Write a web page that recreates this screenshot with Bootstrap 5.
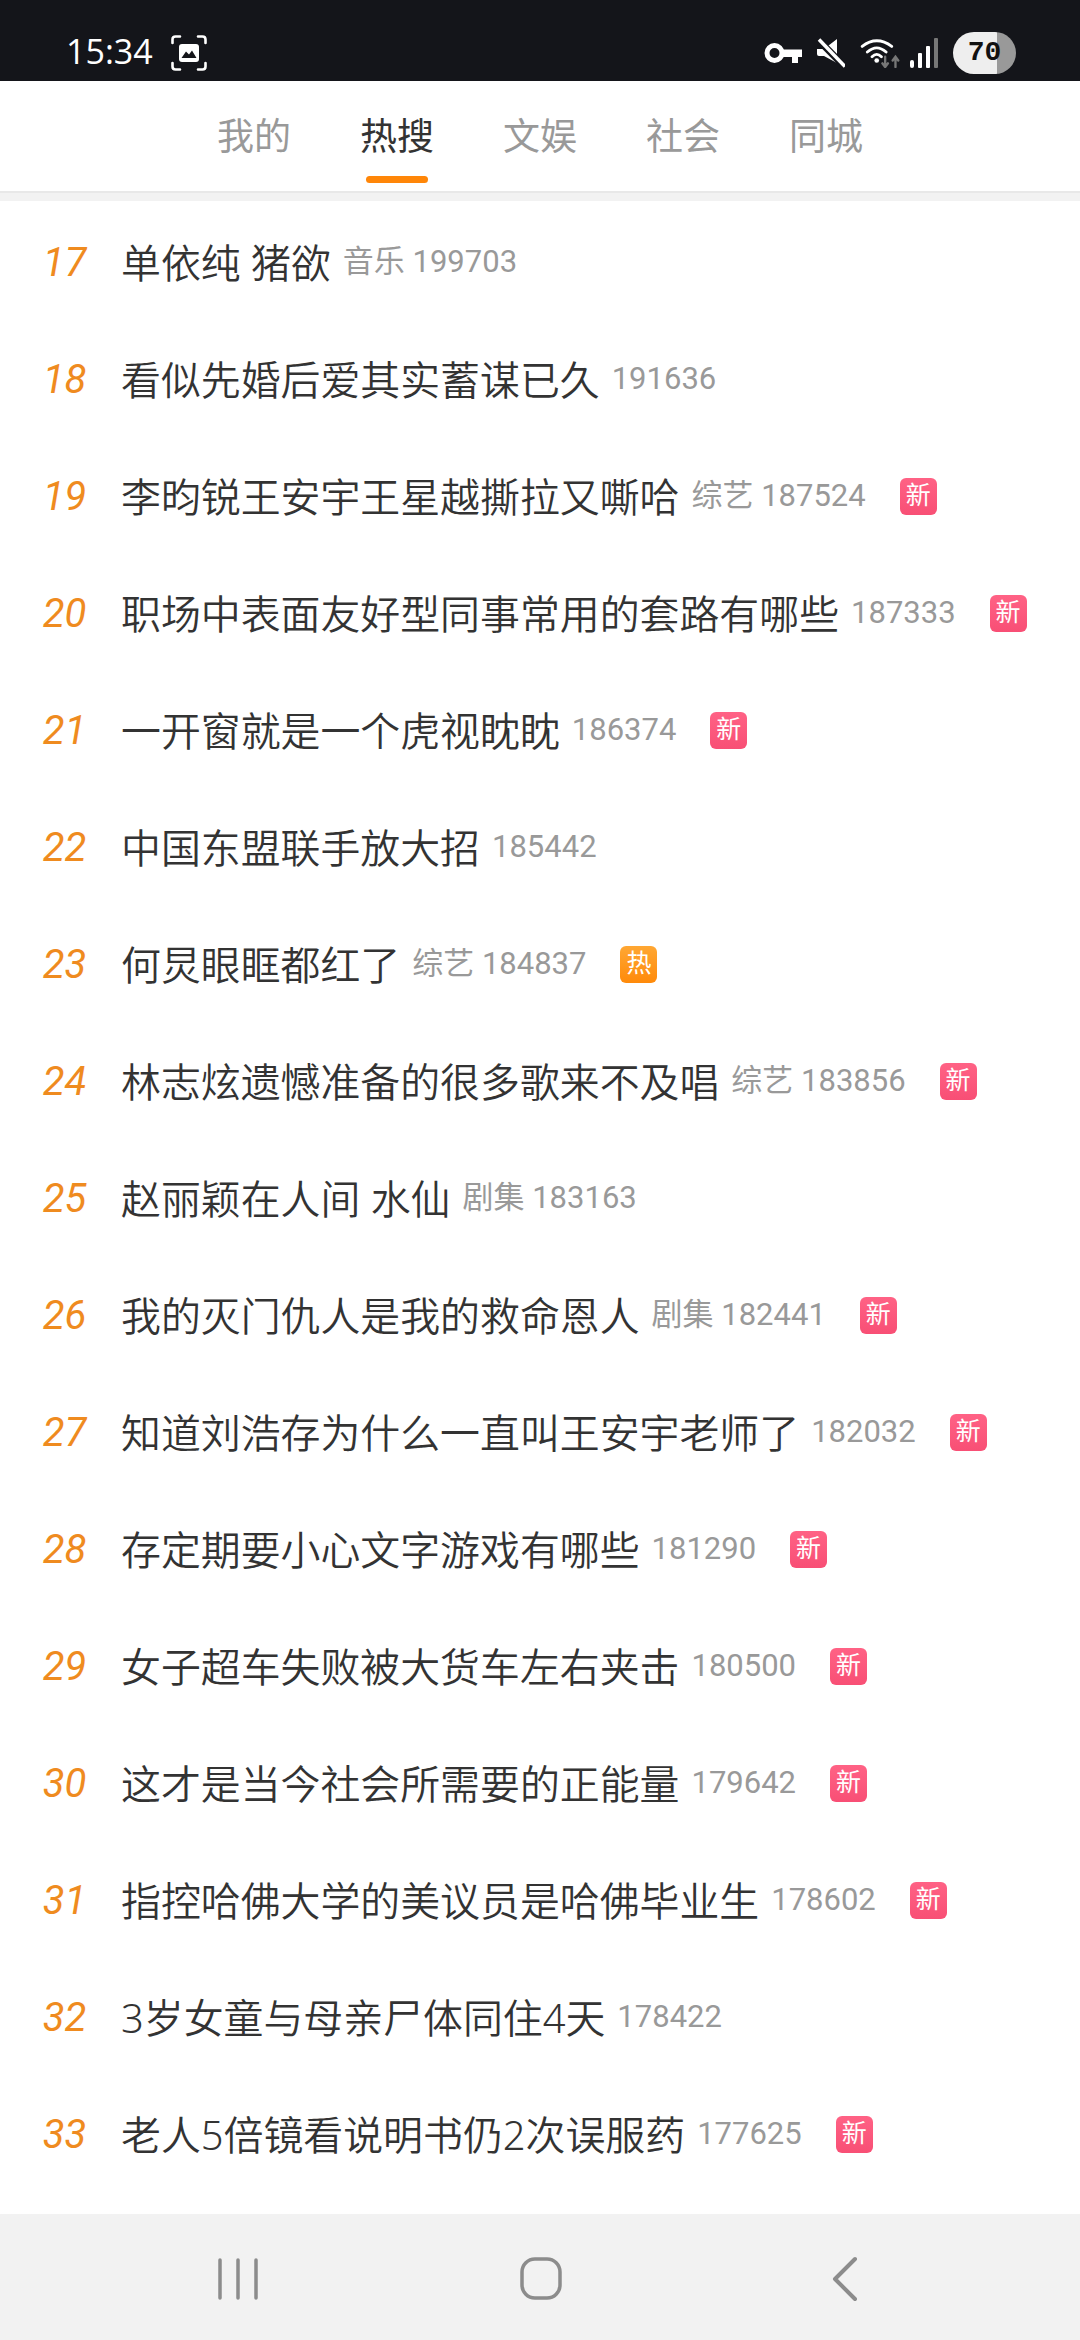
<!DOCTYPE html>
<html lang="zh-CN">
<head>
    <meta charset="UTF-8">
    <meta name="viewport" content="width=device-width, initial-scale=1.0">
    <title>热搜</title>
    <link rel="stylesheet" href="https://cdn.jsdelivr.net/npm/bootstrap@5.3.0/dist/css/bootstrap.min.css">
    <style>
        html, body { height: 2340px; overflow: hidden; }
        body {
            background: #fff;
            font-family: Roboto, "Noto Sans CJK SC", sans-serif;
        }
        .phone { height: 2340px; }
        .status-strip { height: 81px; background: #14151a; color: #fff; padding: 24px 64px 0 66px; }
        .status-time { width: 105px; margin-top: -4px; font-family: "Open Sans", sans-serif; font-size: 34px; line-height: 1; }
        .status-icons { gap: 15px; }
        .sig-icon { margin-left: -5px; }
        .batt-pill {
            width: 63px; height: 42px; border-radius: 21px;
            background: linear-gradient(90deg, #eee 0, #eee 44px, #999 44px);
            color: #111; font-family: "Liberation Mono", monospace; font-weight: 700; font-size: 28px; line-height: 42px;
            text-align: center;
        }
        .tab-strip { height: 112px; border-bottom: 2px solid #e8e8e8; padding-top: 36px; }
        .tab-cell { width: 143px; font-size: 37px; line-height: 42px; color: #999; text-align: center; }
        .tab-cell.is-on { color: #333; }
        .tab-bar { width: 62px; height: 7px; border-radius: 4px; background: #ff8608; margin: 17px auto 0; }
        .gap-strip { height: 8px; background: #f2f2f2; }
        .hot-list { padding-top: 3px; }
        .hot-row { height: 117px; padding: 0; border: 0; }
        .hot-num {
            width: 121px; padding-left: 8px; text-align: center; flex: none;
            font-size: 40px; font-style: italic; color: #ef8b1f;
        }
        .hot-title { font-family: "Noto Sans", "Noto Sans CJK SC", sans-serif; font-size: 39.9px; color: #333; white-space: nowrap; font-weight: 350; }
        .hot-sub { font-size: 31px; color: #999; white-space: nowrap; margin-left: 12px; }
        .hot-tag {
            width: 37px; height: 37px; border-radius: 6px; margin-left: 34px; flex: none;
            font-size: 25px; line-height: 36px; text-align: center; color: #fff;
        }
        .tag-new { background: linear-gradient(180deg, #ff6285, #f84f75); }
        .tag-hot { background: linear-gradient(180deg, #ffa733, #ff8a0a); }
        .sys-nav { height: 126px; background: #f2f2f2; }
        .sys-nav svg { display: block; }
    </style>
</head>
<body>
<div class="phone d-flex flex-column">
    <div class="status-strip d-flex align-items-center">
        <span class="status-time">15:34</span>
        <svg width="36" height="36" viewBox="0 0 36 36" fill="none" stroke="#fff" stroke-width="2.6" stroke-linecap="round">
            <path d="M1.5 8V4.500Q1.500 1.500 4.500 1.500H9M27 1.500H31.500Q34.500 1.500 34.500 4.500V8M1.500 28V31.500Q1.500 34.500 4.500 34.500H9M27 34.500H31.500Q34.500 34.500 34.500 31.500V28"/>
            <rect x="8" y="9" width="20" height="18" rx="3" fill="#fff" stroke="none"/>
            <path d="M10.500 23L15 16.500L18 19.500L21 15.500L25.500 23Z" fill="#14151a" stroke="none"/>
        </svg>
        <div class="status-icons d-flex align-items-center ms-auto">
            <svg width="38" height="22" viewBox="0 0 38 22" fill="none">
                <circle cx="10.500" cy="11" r="7.500" stroke="#fff" stroke-width="5"/>
                <path d="M18 7.500H38V15H34V21H28V15H18Z" fill="#fff"/>
            </svg>
            <svg width="28" height="30" viewBox="0 0 28 30" fill="none">
                <path d="M0 11H7L20 1V25L7 18H2Q0 18 0 16Z" fill="#fff"/>
                <path d="M1 1.500L28 29" stroke="#14151a" stroke-width="7"/>
                <path d="M2 1.500L28 28.500" stroke="#fff" stroke-width="3.500"/>
            </svg>
            <svg width="40" height="30" viewBox="0 0 41 32" fill="none" stroke="#fff" stroke-width="3" stroke-linecap="round">
                <path d="M1.500 9Q17 -3 33 9M7 15Q17 6 27 15M12 20Q17 15 22 20"/>
                <circle cx="17" cy="24" r="2.500" fill="#fff" stroke="none"/>
                <path d="M26 20V31M23 27L26 31L29 27M37 31V20M34 24L37 20L40 24" stroke="#777" stroke-width="2.500"/>
            </svg>
            <svg class="sig-icon" width="28" height="30" viewBox="0 0 28 30" fill="#fff">
                <rect x="0" y="22" width="4" height="8" rx="2"/>
                <rect x="8" y="15" width="4" height="15" rx="1"/>
                <rect x="16" y="8" width="4" height="22" rx="1"/>
                <rect x="24" y="0" width="4" height="30" rx="1" fill="#777"/>
            </svg>
            <div class="batt-pill">70</div>
        </div>
    </div>

    <div class="tab-strip d-flex justify-content-center">
        <div class="tab-cell">我的</div>
        <div class="tab-cell is-on">热搜<div class="tab-bar"></div></div>
        <div class="tab-cell">文娱</div>
        <div class="tab-cell">社会</div>
        <div class="tab-cell">同城</div>
    </div>
    <div class="gap-strip"></div>

    <div class="hot-list list-group list-group-flush flex-grow-1">
        <div class="hot-row list-group-item d-flex align-items-center"><span class="hot-num">17</span><span class="hot-title">单依纯 猪欲</span><span class="hot-sub">音乐 199703</span></div>
        <div class="hot-row list-group-item d-flex align-items-center"><span class="hot-num">18</span><span class="hot-title">看似先婚后爱其实蓄谋已久</span><span class="hot-sub">191636</span></div>
        <div class="hot-row list-group-item d-flex align-items-center"><span class="hot-num">19</span><span class="hot-title">李昀锐王安宇王星越撕拉又嘶哈</span><span class="hot-sub">综艺 187524</span><span class="hot-tag tag-new">新</span></div>
        <div class="hot-row list-group-item d-flex align-items-center"><span class="hot-num">20</span><span class="hot-title">职场中表面友好型同事常用的套路有哪些</span><span class="hot-sub">187333</span><span class="hot-tag tag-new">新</span></div>
        <div class="hot-row list-group-item d-flex align-items-center"><span class="hot-num">21</span><span class="hot-title">一开窗就是一个虎视眈眈</span><span class="hot-sub">186374</span><span class="hot-tag tag-new">新</span></div>
        <div class="hot-row list-group-item d-flex align-items-center"><span class="hot-num">22</span><span class="hot-title">中国东盟联手放大招</span><span class="hot-sub">185442</span></div>
        <div class="hot-row list-group-item d-flex align-items-center"><span class="hot-num">23</span><span class="hot-title">何炅眼眶都红了</span><span class="hot-sub">综艺 184837</span><span class="hot-tag tag-hot">热</span></div>
        <div class="hot-row list-group-item d-flex align-items-center"><span class="hot-num">24</span><span class="hot-title">林志炫遗憾准备的很多歌来不及唱</span><span class="hot-sub">综艺 183856</span><span class="hot-tag tag-new">新</span></div>
        <div class="hot-row list-group-item d-flex align-items-center"><span class="hot-num">25</span><span class="hot-title">赵丽颖在人间 水仙</span><span class="hot-sub">剧集 183163</span></div>
        <div class="hot-row list-group-item d-flex align-items-center"><span class="hot-num">26</span><span class="hot-title">我的灭门仇人是我的救命恩人</span><span class="hot-sub">剧集 182441</span><span class="hot-tag tag-new">新</span></div>
        <div class="hot-row list-group-item d-flex align-items-center"><span class="hot-num">27</span><span class="hot-title">知道刘浩存为什么一直叫王安宇老师了</span><span class="hot-sub">182032</span><span class="hot-tag tag-new">新</span></div>
        <div class="hot-row list-group-item d-flex align-items-center"><span class="hot-num">28</span><span class="hot-title">存定期要小心文字游戏有哪些</span><span class="hot-sub">181290</span><span class="hot-tag tag-new">新</span></div>
        <div class="hot-row list-group-item d-flex align-items-center"><span class="hot-num">29</span><span class="hot-title">女子超车失败被大货车左右夹击</span><span class="hot-sub">180500</span><span class="hot-tag tag-new">新</span></div>
        <div class="hot-row list-group-item d-flex align-items-center"><span class="hot-num">30</span><span class="hot-title">这才是当今社会所需要的正能量</span><span class="hot-sub">179642</span><span class="hot-tag tag-new">新</span></div>
        <div class="hot-row list-group-item d-flex align-items-center"><span class="hot-num">31</span><span class="hot-title">指控哈佛大学的美议员是哈佛毕业生</span><span class="hot-sub">178602</span><span class="hot-tag tag-new">新</span></div>
        <div class="hot-row list-group-item d-flex align-items-center"><span class="hot-num">32</span><span class="hot-title">3岁女童与母亲尸体同住4天</span><span class="hot-sub">178422</span></div>
        <div class="hot-row list-group-item d-flex align-items-center"><span class="hot-num">33</span><span class="hot-title">老人5倍镜看说明书仍2次误服药</span><span class="hot-sub">177625</span><span class="hot-tag tag-new">新</span></div>
    </div>

    <div class="sys-nav d-flex align-items-center justify-content-center">
        <svg width="1080" height="126" viewBox="0 0 1080 126" fill="none" stroke="#8c8c8c" stroke-width="3.500" stroke-linecap="round" stroke-linejoin="round">
            <path d="M220 46V84M238 46V84M256 46V84"/>
            <rect x="522" y="45" width="38" height="39" rx="13"/>
            <path d="M855 45L835 65L855 85" stroke-width="4"/>
        </svg>
    </div>
</div>
<script src="https://cdn.jsdelivr.net/npm/bootstrap@5.3.0/dist/js/bootstrap.bundle.min.js"></script>
</body>
</html>
